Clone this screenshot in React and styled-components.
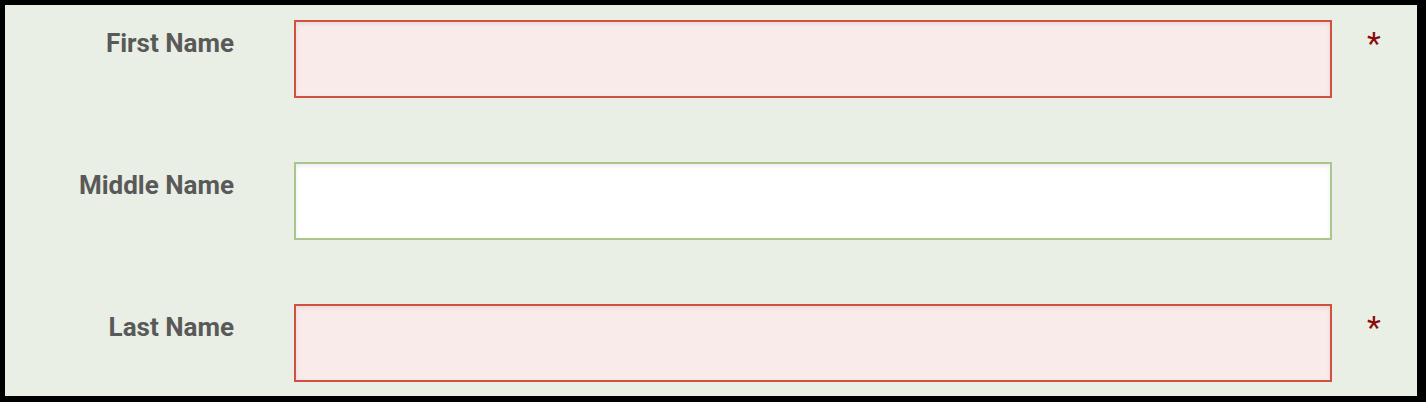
import React from 'react';
import styled, { createGlobalStyle } from 'styled-components';

const Global = createGlobalStyle`
  html, body {
    margin: 0;
    padding: 0;
    background: #000;
  }
  body {
    font-family: Roboto, "Liberation Sans", sans-serif;
  }
`

const Frame = styled.div`
  width: 1426px;
  height: 402px;
  box-sizing: border-box;
  padding: 5px 9px 6px 5px;
  background: #000;
`

const Form = styled.form`
  height: 100%;
  box-sizing: border-box;
  background: #e9efe4;
  padding: 15px 0 0 0;
  display: flex;
  flex-direction: column;
  gap: 64px;
`

const Row = styled.div`
  display: grid;
  grid-template-columns: 254px 1038px minmax(0, 1fr);
  column-gap: 35px;
  align-items: start;
`

const Label = styled.label`
  text-align: right;
  padding-right: 25px;
  font-size: 26px;
  font-weight: 700;
  color: #595959;
  line-height: 30px;
  padding-top: 8px;
`

const Input = styled.input`
  box-sizing: border-box;
  width: 1038px;
  height: 78px;
  margin: 0;
  border: 2px solid ${p => (p.$error ? '#d2503f' : '#abc68c')};
  background: ${p => (p.$error ? '#f9ebea' : '#fff')};
  box-shadow: inset 0 2px 4px rgba(0, 0, 0, 0.08);
  outline: none;
  font-family: inherit;
  font-size: 22px;
  padding: 0 12px;
`

const Required = styled.span`
  color: #8b0b0b;
  font-size: 32px;
  font-weight: 400;
  line-height: 30px;
  padding-top: 8px;
`

const fields = [
  { label: 'First Name', required: true },
  { label: 'Middle Name', required: false },
  { label: 'Last Name', required: true },
]

export default function App() {
  return (
    <Frame>
      <Global />
      <Form>
        {fields.map(f => (
          <Row key={f.label}>
            <Label>{f.label}</Label>
            <Input type="text" $error={f.required} />
            {f.required ? <Required>*</Required> : <span />}
          </Row>
        ))}
      </Form>
    </Frame>
  )
}
